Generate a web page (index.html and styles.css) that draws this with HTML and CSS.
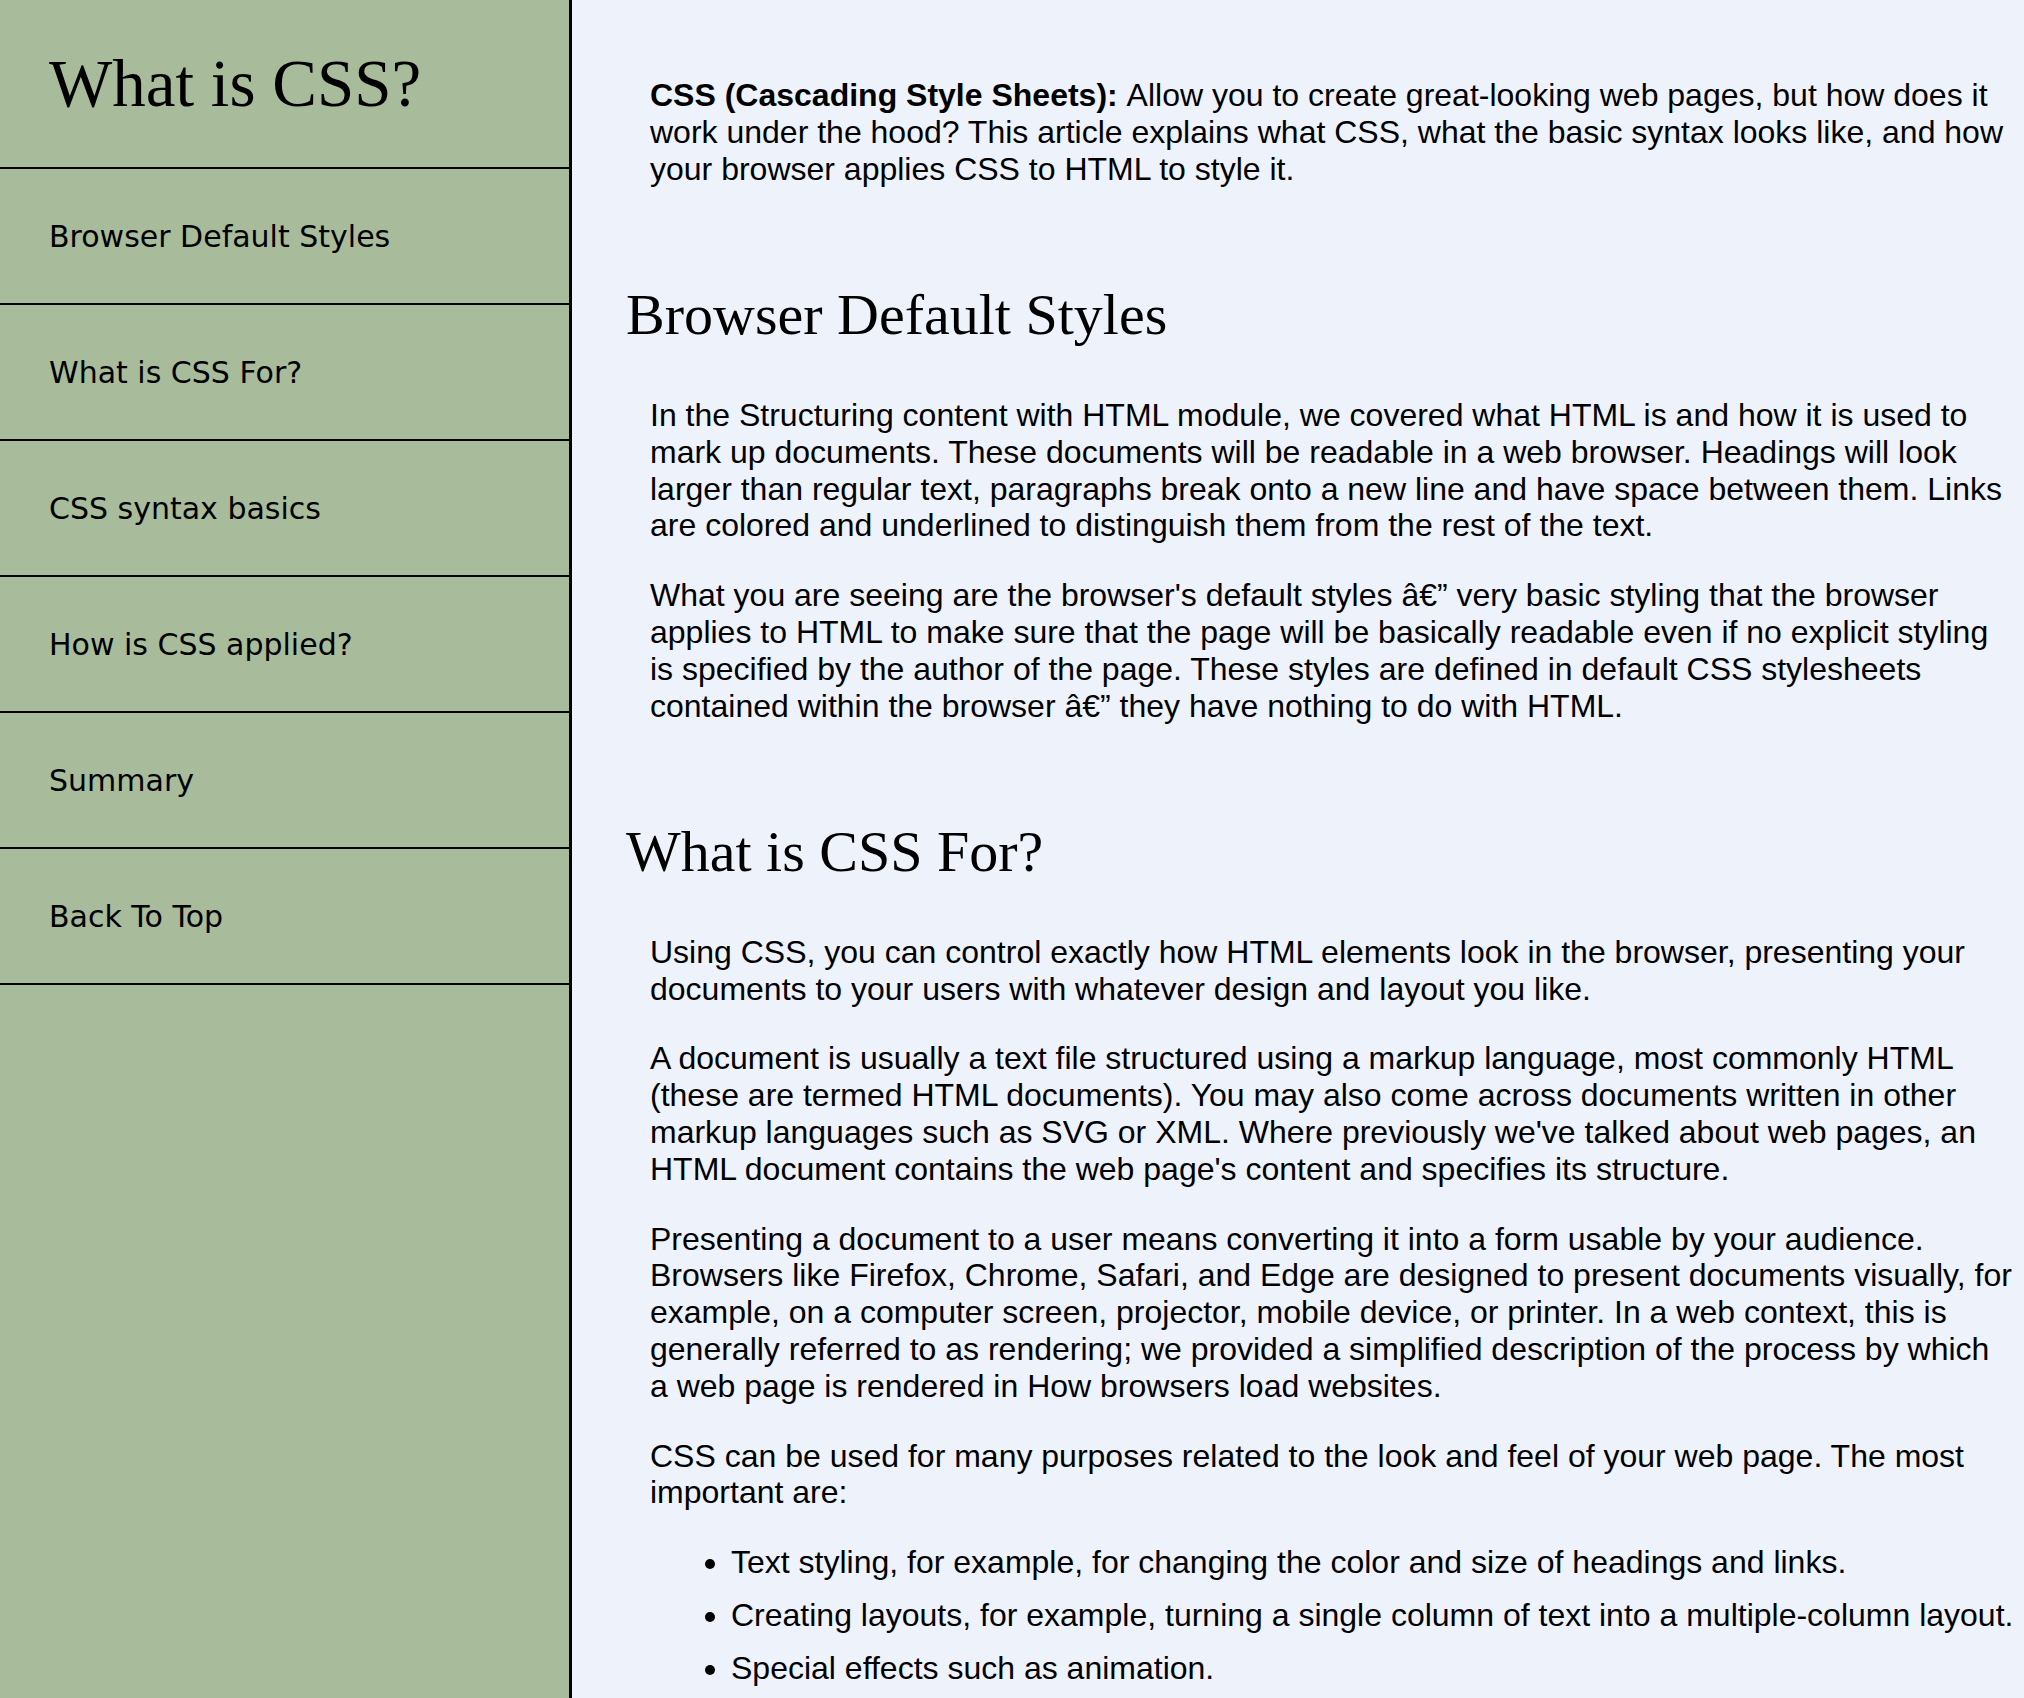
FILE: index.html
```html
<!DOCTYPE html>
<html lang="en">
<head>
<meta charset="utf-8">
<title>What is CSS?</title>
<link rel="stylesheet" href="styles.css">
</head>
<body>
<div class="layout">
  <nav class="sidebar">
    <header class="sidebar-header">
      <h1 class="sidebar-title">What is CSS?</h1>
    </header>
    <ul class="nav-list">
      <li class="nav-item"><a class="nav-link" href="#browser-default-styles">Browser Default Styles</a></li>
      <li class="nav-item"><a class="nav-link" href="#what-is-css-for">What is CSS For?</a></li>
      <li class="nav-item"><a class="nav-link" href="#css-syntax-basics">CSS syntax basics</a></li>
      <li class="nav-item"><a class="nav-link" href="#how-is-css-applied">How is CSS applied?</a></li>
      <li class="nav-item"><a class="nav-link" href="#summary">Summary</a></li>
      <li class="nav-item"><a class="nav-link" href="#top">Back To Top</a></li>
    </ul>
  </nav>
  <main class="content">
    <p class="text intro"><strong class="lead">CSS (Cascading Style Sheets): </strong>Allow you to create great-looking web pages, but how does it work under the hood? This article explains what CSS, what the basic syntax looks like, and how your browser applies CSS to HTML to style it.</p>

    <section class="section" id="browser-default-styles">
      <h2 class="section-title">Browser Default Styles</h2>
      <p class="text">In the Structuring content with HTML module, we covered what HTML is and how it is used to mark up documents. These documents will be readable in a web browser. Headings will look larger than regular text, paragraphs break onto a new line and have space between them. Links are colored and underlined to distinguish them from the rest of the text.</p>
      <p class="text">What you are seeing are the browser's default styles &acirc;&euro;&rdquo; very basic styling that the browser applies to HTML to make sure that the page will be basically readable even if no explicit styling is specified by the author of the page. These styles are defined in default CSS stylesheets contained within the browser &acirc;&euro;&rdquo; they have nothing to do with HTML.</p>
    </section>

    <section class="section" id="what-is-css-for">
      <h2 class="section-title">What is CSS For?</h2>
      <p class="text">Using CSS, you can control exactly how HTML elements look in the browser, presenting your documents to your users with whatever design and layout you like.</p>
      <p class="text">A document is usually a text file structured using a markup language, most commonly HTML (these are termed HTML documents). You may also come across documents written in other markup languages such as SVG or XML. Where previously we've talked about web pages, an HTML document contains the web page's content and specifies its structure.</p>
      <p class="text">Presenting a document to a user means converting it into a form usable by your audience. Browsers like Firefox, Chrome, Safari, and Edge are designed to present documents visually, for example, on a computer screen, projector, mobile device, or printer. In a web context, this is generally referred to as rendering; we provided a simplified description of the process by which a web page is rendered in How browsers load websites.</p>
      <p class="text">CSS can be used for many purposes related to the look and feel of your web page. The most important are:</p>
      <ul class="bullets">
        <li class="bullet">Text styling, for example, for changing the color and size of headings and links.</li>
        <li class="bullet">Creating layouts, for example, turning a single column of text into a multiple-column layout.</li>
        <li class="bullet">Special effects such as animation.</li>
      </ul>
    </section>
  </main>
</div>
</body>
</html>
```

FILE: styles.css
```css
html, body {
  margin: 0;
  padding: 0;
}

body {
  background: #eef3fb;
  color: #000;
  font-family: "Liberation Sans", Arial, sans-serif;
}

.layout {
  display: flex;
  min-height: 100vh;
}

.sidebar {
  width: 569px;
  flex-shrink: 0;
  background: #a8bc9b;
  border-right: 3px solid #000;
}

.sidebar-header {
  height: 167px;
  display: flex;
  align-items: center;
  padding-left: 49px;
  border-bottom: 2px solid #000;
}

.sidebar-title {
  margin: 0;
  font-family: "Liberation Serif", "Times New Roman", serif;
  font-weight: 400;
  font-size: 67px;
  line-height: 77px;
}

.nav-list {
  list-style: none;
  margin: 0;
  padding: 0;
}

.nav-link {
  display: flex;
  align-items: center;
  height: 134px;
  padding-left: 49px;
  border-bottom: 2px solid #000;
  color: #000;
  text-decoration: none;
  font-family: "DejaVu Sans", Verdana, sans-serif;
  font-size: 30px;
}

.content {
  flex: 1;
  min-width: 0;
  padding: 77px 8px 0 54px;
}

.text {
  margin: 0 0 33px 24px;
  font-size: 32px;
  line-height: 36.8px;
}

.intro {
  margin-top: 0;
}

.lead {
  font-weight: 700;
}

.section-title {
  margin: 95px 0 49px;
  font-family: "Liberation Serif", "Times New Roman", serif;
  font-weight: 400;
  font-size: 58px;
  line-height: 65.55px;
}

.bullets {
  margin: 33px 0 0 24px;
  padding-left: 81px;
  font-size: 32px;
  line-height: 36.8px;
}

.bullet {
  margin-bottom: 16px;
}
```
